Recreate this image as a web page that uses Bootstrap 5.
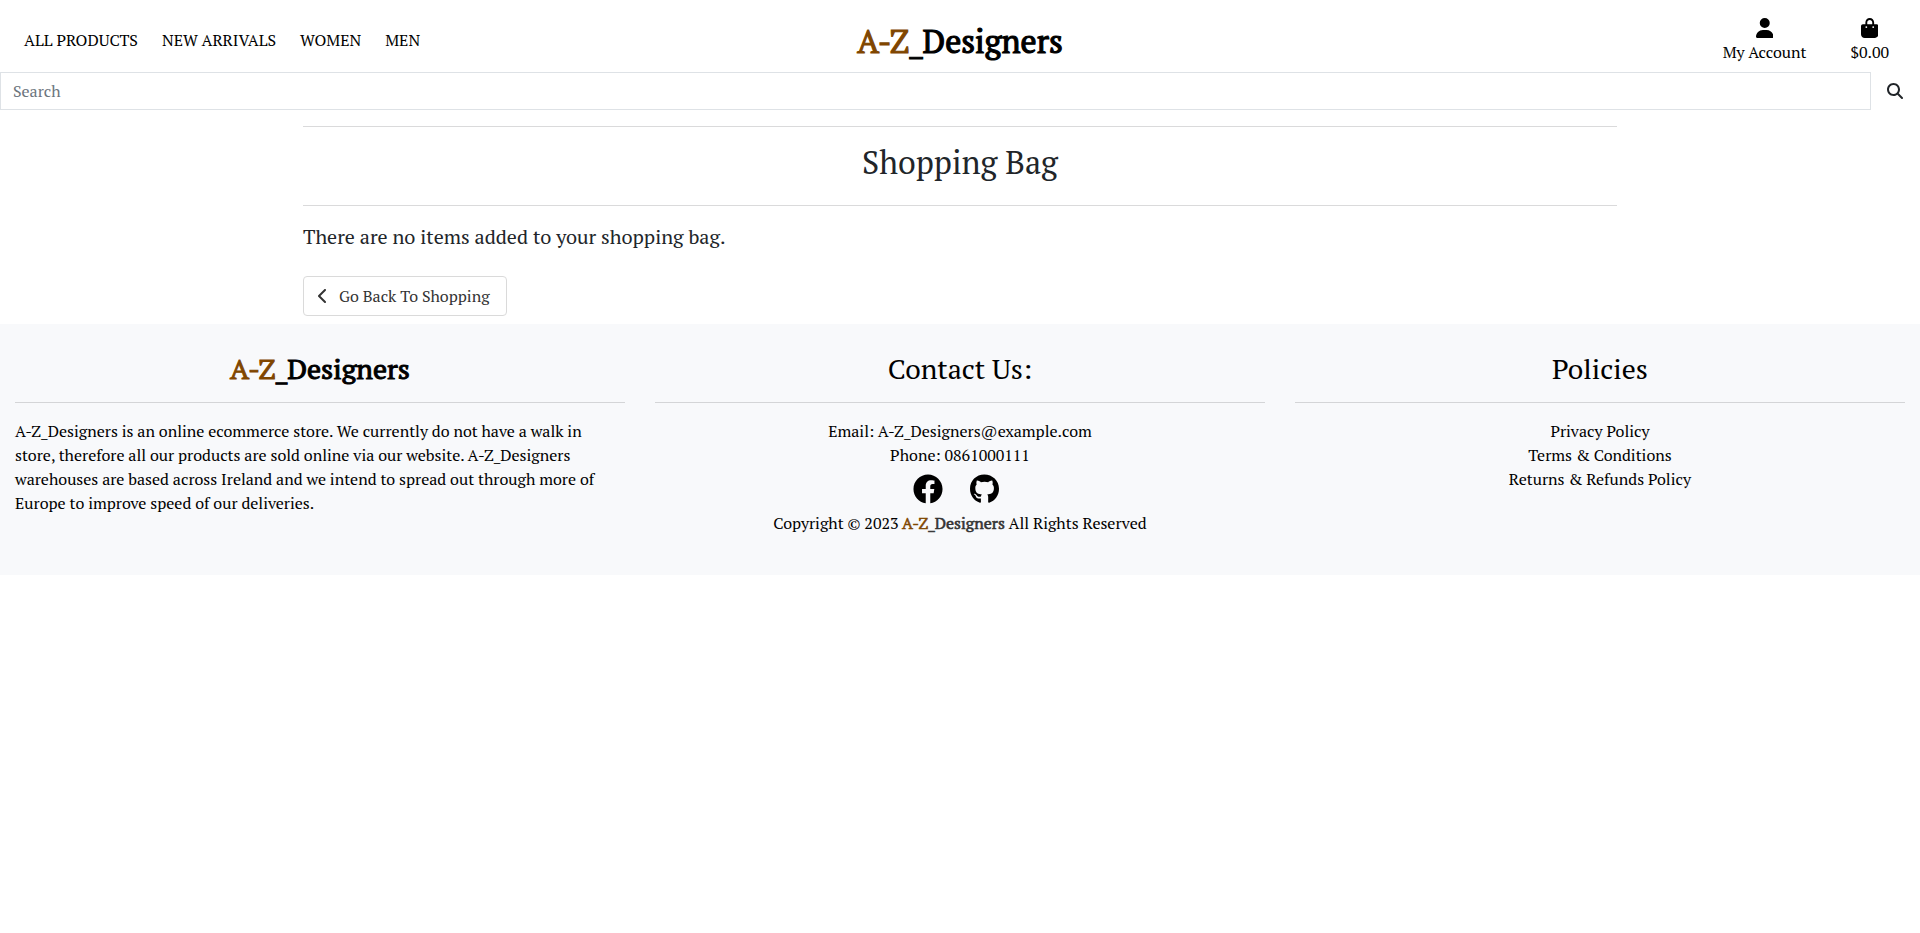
<!DOCTYPE html>
<html lang="en">
<head>
<meta charset="utf-8">
<meta name="viewport" content="width=device-width, initial-scale=1">
<title>A-Z_Designers</title>
<link href="https://cdn.jsdelivr.net/npm/bootstrap@5.3.0/dist/css/bootstrap.min.css" rel="stylesheet">
<style>
  body { font-family: "PT Serif", "Liberation Serif", serif; color: #212529; }
  .top-row { height: 72px; }
  .top-side { flex: 1 1 0; }
  .main-links { gap: 24px; padding: 0 6px 0 24px; }
  .shop-link { color: #000; text-decoration: none; }
  .brand-name { color: #000; -webkit-text-stroke: .035em currentColor; text-decoration: none; }
  .brand-name span { color: #804600; }
  .brand-top { font-size: 32px; line-height: 48px; padding-top: 9px; }
  .brand-small { color: #333; }
  .user-links { gap: 45px; padding: 18px 30px 0 0; }
  .user-links a { line-height: 24px; }
  .user-links a:last-child { margin-right: 1px; }
  .user-links a:first-child { margin-right: -1px; }
  .user-links svg { display: block; height: 20px; margin: 0 auto 2px; }
  .search-box { height: 38px; }
  .search-box .form-control { border-color: #dee2e6; }
  .search-box .form-control::placeholder { color: #6c757d; opacity: 1; }
  .search-btn { width: 49px; padding: 0 2px 0 0; }
  .bag { width: 70%; padding: 0 15px; }
  hr { border-color: #212529; opacity: .17; }
  .back-btn { color: #333; border: 1px solid #dadada; height: 40px; padding: 0 16px 0 14px; gap: 11px; border-radius: 4px; background: #fff; }
  footer { background: #f8f9fb; color: #000; height: 251px; padding-top: 28px; }
  footer .col-4 { padding: 0 15px; }
  footer .about { padding-right: 20px; }
  .social { gap: 27px; padding: 7px 8px 7px 0; }
</style>
</head>
<body>
<header>
  <div class="top-row d-flex">
    <nav class="top-side main-links d-flex align-items-center pt-2">
      <a class="shop-link" href="#">ALL PRODUCTS</a>
      <a class="shop-link" href="#">NEW ARRIVALS</a>
      <a class="shop-link" href="#">WOMEN</a>
      <a class="shop-link" href="#">MEN</a>
    </nav>
    <a class="brand-name brand-top align-self-center" href="#"><span>A-Z</span>_Designers</a>
    <div class="top-side user-links d-flex justify-content-end text-center">
      <a class="shop-link" href="#">
        <svg viewBox="0 0 448 512" fill="currentColor"><path d="M224 256A128 128 0 1 0 224 0a128 128 0 1 0 0 256zm-45.700 48C79.800 304 0 383.800 0 482.300C0 498.700 13.300 512 29.700 512H418.300c16.400 0 29.700-13.300 29.700-29.700C448 383.800 368.200 304 269.700 304H178.300z"/></svg>
        My Account</a>
      <a class="shop-link" href="#">
        <svg viewBox="0 0 448 512" fill="currentColor"><path d="M160 112c0-35.300 28.700-64 64-64s64 28.700 64 64v48H160V112zm-48 48H48c-26.500 0-48 21.500-48 48V416c0 53 43 96 96 96H352c53 0 96-43 96-96V208c0-26.500-21.500-48-48-48H336V112C336 50.100 285.900 0 224 0S112 50.100 112 112v48zm24 48a24 24 0 1 1 0 48 24 24 0 1 1 0-48zm152 24a24 24 0 1 1 48 0 24 24 0 1 1 -48 0z"/></svg>
        $0.00</a>
    </div>
  </div>
  <form class="search-box d-flex">
    <input class="form-control rounded-0" type="text" placeholder="Search" aria-label="Search">
    <button class="btn search-btn flex-shrink-0 d-flex align-items-center justify-content-center" type="button" aria-label="Search">
      <svg width="16" height="16" viewBox="0 0 512 512" fill="currentColor"><path d="M416 208c0 45.900-14.900 88.300-40 122.700L502.600 457.400c12.500 12.500 12.500 32.800 0 45.300s-32.800 12.500-45.300 0L330.700 376c-34.400 25.200-76.800 40-122.700 40C93.100 416 0 322.900 0 208S93.100 0 208 0S416 93.100 416 208zM208 352a144 144 0 1 0 0-288 144 144 0 1 0 0 288z"/></svg>
    </button>
  </form>
</header>
<main class="bag mx-auto">
  <hr class="my-3">
  <h2 class="text-center mb-4 fw-normal">Shopping Bag</h2>
  <hr class="my-3">
  <p class="fs-5 mb-4">There are no items added to your shopping bag.</p>
  <a class="back-btn d-inline-flex align-items-center text-decoration-none mb-2" href="#">
    <svg width="10" height="16" viewBox="0 0 320 512" fill="currentColor"><path d="M9.400 233.400c-12.500 12.500-12.500 32.800 0 45.300l192 192c12.500 12.500 32.800 12.500 45.300 0s12.500-32.800 0-45.300L77.300 256 246.600 86.600c12.500-12.500 12.500-32.800 0-45.300s-32.800-12.500-45.300 0l-192 192z"/></svg>
    Go Back To Shopping</a>
</main>
<footer>
  <div class="row g-0">
    <div class="col-4">
      <h3 class="brand-name text-center fw-normal"><span>A-Z</span>_Designers</h3>
      <hr class="my-3">
      <p class="about mb-0">A-Z_Designers is an online ecommerce store. We currently do not have a walk in store, therefore all our products are sold online via our website. A-Z_Designers warehouses are based across Ireland and we intend to spread out through more of Europe to improve speed of our deliveries.</p>
    </div>
    <div class="col-4 text-center">
      <h3 class="fw-normal">Contact Us:</h3>
      <hr class="my-3">
      <div>Email: A-Z_Designers@example.com</div>
      <div>Phone: 0861000111</div>
      <div class="social d-flex justify-content-center">
        <svg width="30" height="30" viewBox="0 0 512 512" fill="currentColor"><path d="M504 256C504 119 393 8 256 8S8 119 8 256c0 123.780 90.690 226.380 209.250 245V327.690h-63V256h63v-54.640c0-62.150 37-96.480 93.670-96.480 27.140 0 55.520 4.840 55.520 4.840v61h-31.280c-30.800 0-40.410 19.120-40.410 38.730V256h68.780l-11 71.690h-57.780V501C413.310 482.380 504 379.780 504 256z"/></svg>
        <svg width="29" height="30" viewBox="0 0 496 512" fill="currentColor"><path d="M244.800 8C106.100 8 0 113.300 0 252c0 110.900 69.800 205.800 169.500 239.200 12.800 2.300 17.300-5.600 17.300-12.100 0-6.200-.3-40.400-.3-61.400 0 0-70 15-84.700-29.800 0 0-11.400-29.100-27.800-36.600 0 0-22.900-15.700 1.600-15.400 0 0 24.900 2 38.600 25.800 21.900 38.600 58.600 27.500 72.900 20.900 2.300-16 8.800-27.100 16-33.700-55.900-6.200-112.300-14.300-112.300-110.500 0-27.500 7.600-41.300 23.600-58.900-2.600-6.500-11.100-33.300 2.600-67.900 20.900-6.500 69 27 69 27 20-5.600 41.500-8.500 62.800-8.500s42.800 2.900 62.800 8.500c0 0 48.100-33.600 69-27 13.700 34.700 5.200 61.400 2.600 67.900 16 17.700 25.800 31.500 25.800 58.900 0 96.500-58.900 104.200-114.800 110.500 9.200 7.900 17 22.900 17 46.400 0 33.700-.3 75.400-.3 83.600 0 6.500 4.600 14.400 17.300 12.100C428.200 457.800 496 362.900 496 252 496 113.300 383.500 8 244.800 8z"/></svg>
      </div>
      <div>Copyright © 2023 <span class="brand-name brand-small"><span>A-Z</span>_Designers</span> All Rights Reserved</div>
    </div>
    <div class="col-4 text-center">
      <h3 class="fw-normal">Policies</h3>
      <hr class="my-3">
      <div><a class="shop-link" href="#">Privacy Policy</a></div>
      <div><a class="shop-link" href="#">Terms &amp; Conditions</a></div>
      <div><a class="shop-link" href="#">Returns &amp; Refunds Policy</a></div>
    </div>
  </div>
</footer>
<script src="https://cdn.jsdelivr.net/npm/bootstrap@5.3.0/dist/js/bootstrap.bundle.min.js"></script>
</body>
</html>
